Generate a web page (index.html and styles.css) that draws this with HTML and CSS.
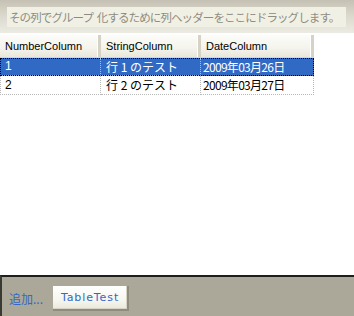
FILE: index.html
```html
<!DOCTYPE html>
<html>
<head>
<meta charset="utf-8">
<link rel="stylesheet" href="styles.css">
</head>
<body>
<div class="page">
  <div class="group-panel">
    <div class="hint">その列でグループ 化するために列ヘッダーをここにドラッグします。</div>
  </div>
  <div class="grid">
    <div class="row header">
      <div class="cell c1">NumberColumn</div>
      <div class="cell c2">StringColumn</div>
      <div class="cell c3">DateColumn</div>
    </div>
    <div class="row data selected">
      <div class="cell c1">1</div>
      <div class="cell c2">行 1 のテスト</div>
      <div class="cell c3">2009年03月26日</div>
    </div>
    <div class="row data second">
      <div class="cell c1">2</div>
      <div class="cell c2">行 2 のテスト</div>
      <div class="cell c3">2009年03月27日</div>
    </div>
  </div>
  <div class="spacer"></div>
  <div class="footer">
    <span class="add">追加...</span>
    <span class="tab">TableTest</span>
  </div>
</div>
</body>
</html>
```
FILE: styles.css
```css
html, body {
  margin: 0;
  padding: 0;
  background: #ffffff;
}
.page {
  width: 354px;
  height: 316px;
  display: flex;
  flex-direction: column;
  font-family: "Liberation Sans", "Noto Sans CJK JP", sans-serif;
  font-size: 11px;
  color: #000;
  overflow: hidden;
}
.group-panel {
  height: 33px;
  box-sizing: border-box;
  padding: 7px 8px 6px 7px;
  background: linear-gradient(to bottom, #c5c1b4 0%, #dcd9ce 50%, #ecebe3 100%);
}
.hint {
  height: 20px;
  line-height: 20px;
  background: #f1f0e4;
  color: #8e8c82;
  padding-left: 2px;
  font-family: "Noto Sans CJK JP", sans-serif;
  font-size: 11.5px;
  letter-spacing: -0.9px;
  word-spacing: 2px;
  white-space: nowrap;
  overflow: hidden;
}
.grid {
  margin-top: 2px;
  width: 314px;
}
.row {
  display: flex;
}
.cell {
  box-sizing: border-box;
  padding-left: 5px;
  white-space: nowrap;
  overflow: hidden;
}
.c1 { width: 101px; }
.c2 { width: 100px; }
.c3 { width: 113px; }
.header {
  height: 23px;
}
.header .cell {
  line-height: 22px;
  background: linear-gradient(to bottom, #fcfcf9 0%, #f4f3ec 60%, #e9e7da 100%);
  border-right: 3px solid #d6d3c6;
  box-shadow: inset -1px 0 0 #ffffff;
  border-bottom: 1px solid #d9d6c9;
}
.data {
  height: 18px;
}
.second {
  height: 19px;
}
.data .cell {
  line-height: 17px;
  font-family: "Noto Sans CJK JP", sans-serif;
  font-size: 12px;
  border-right: 1px dotted #b8b8b8;
  border-bottom: 1px dotted #b8b8b8;
}
.second .cell {
  line-height: 18px;
}
.data .c1 {
  border-left: 1px dotted #b8b8b8;
  padding-left: 4px;
  font-family: "Liberation Sans", "Noto Sans CJK JP", sans-serif;
}
.data .c3 {
  font-family: "Noto Sans CJK JP", sans-serif;
  letter-spacing: -0.7px;
  padding-left: 2px;
}
.selected {
  background: #316ac5;
  outline: 1px dotted #000;
  outline-offset: -1px;
}
.selected .cell {
  color: #ffffff;
  border-right: 1px dotted #a8c0e8;
  border-bottom: 1px dotted #e8a030;
}
.spacer {
  flex: 1;
}
.footer {
  height: 41px;
  box-sizing: border-box;
  background: #aca899;
  border-top: 2px solid #1e1e1a;
  border-left: 2px solid #3a3a34;
  display: flex;
  align-items: center;
  padding-left: 7px;
  gap: 10px;
  font-family: "Noto Sans CJK JP", sans-serif;
}
.add {
  color: #3467c8;
  font-size: 12px;
  margin-top: 3px;
}
.tab {
  width: 76px;
  height: 25px;
  box-sizing: border-box;
  line-height: 23px;
  text-align: center;
  margin-top: 3px;
  color: #3467c8;
  font-family: "DejaVu Sans", sans-serif;
  font-size: 11px;
  letter-spacing: 0.9px;
  background: linear-gradient(to bottom, #ffffff 0%, #f7f6ef 60%, #ebe9dc 100%);
  border-right: 2px solid #8f8c7e;
  border-bottom: 2px solid #8f8c7e;
  box-shadow: inset -1px -1px 0 #d7d4c6;
}
```
